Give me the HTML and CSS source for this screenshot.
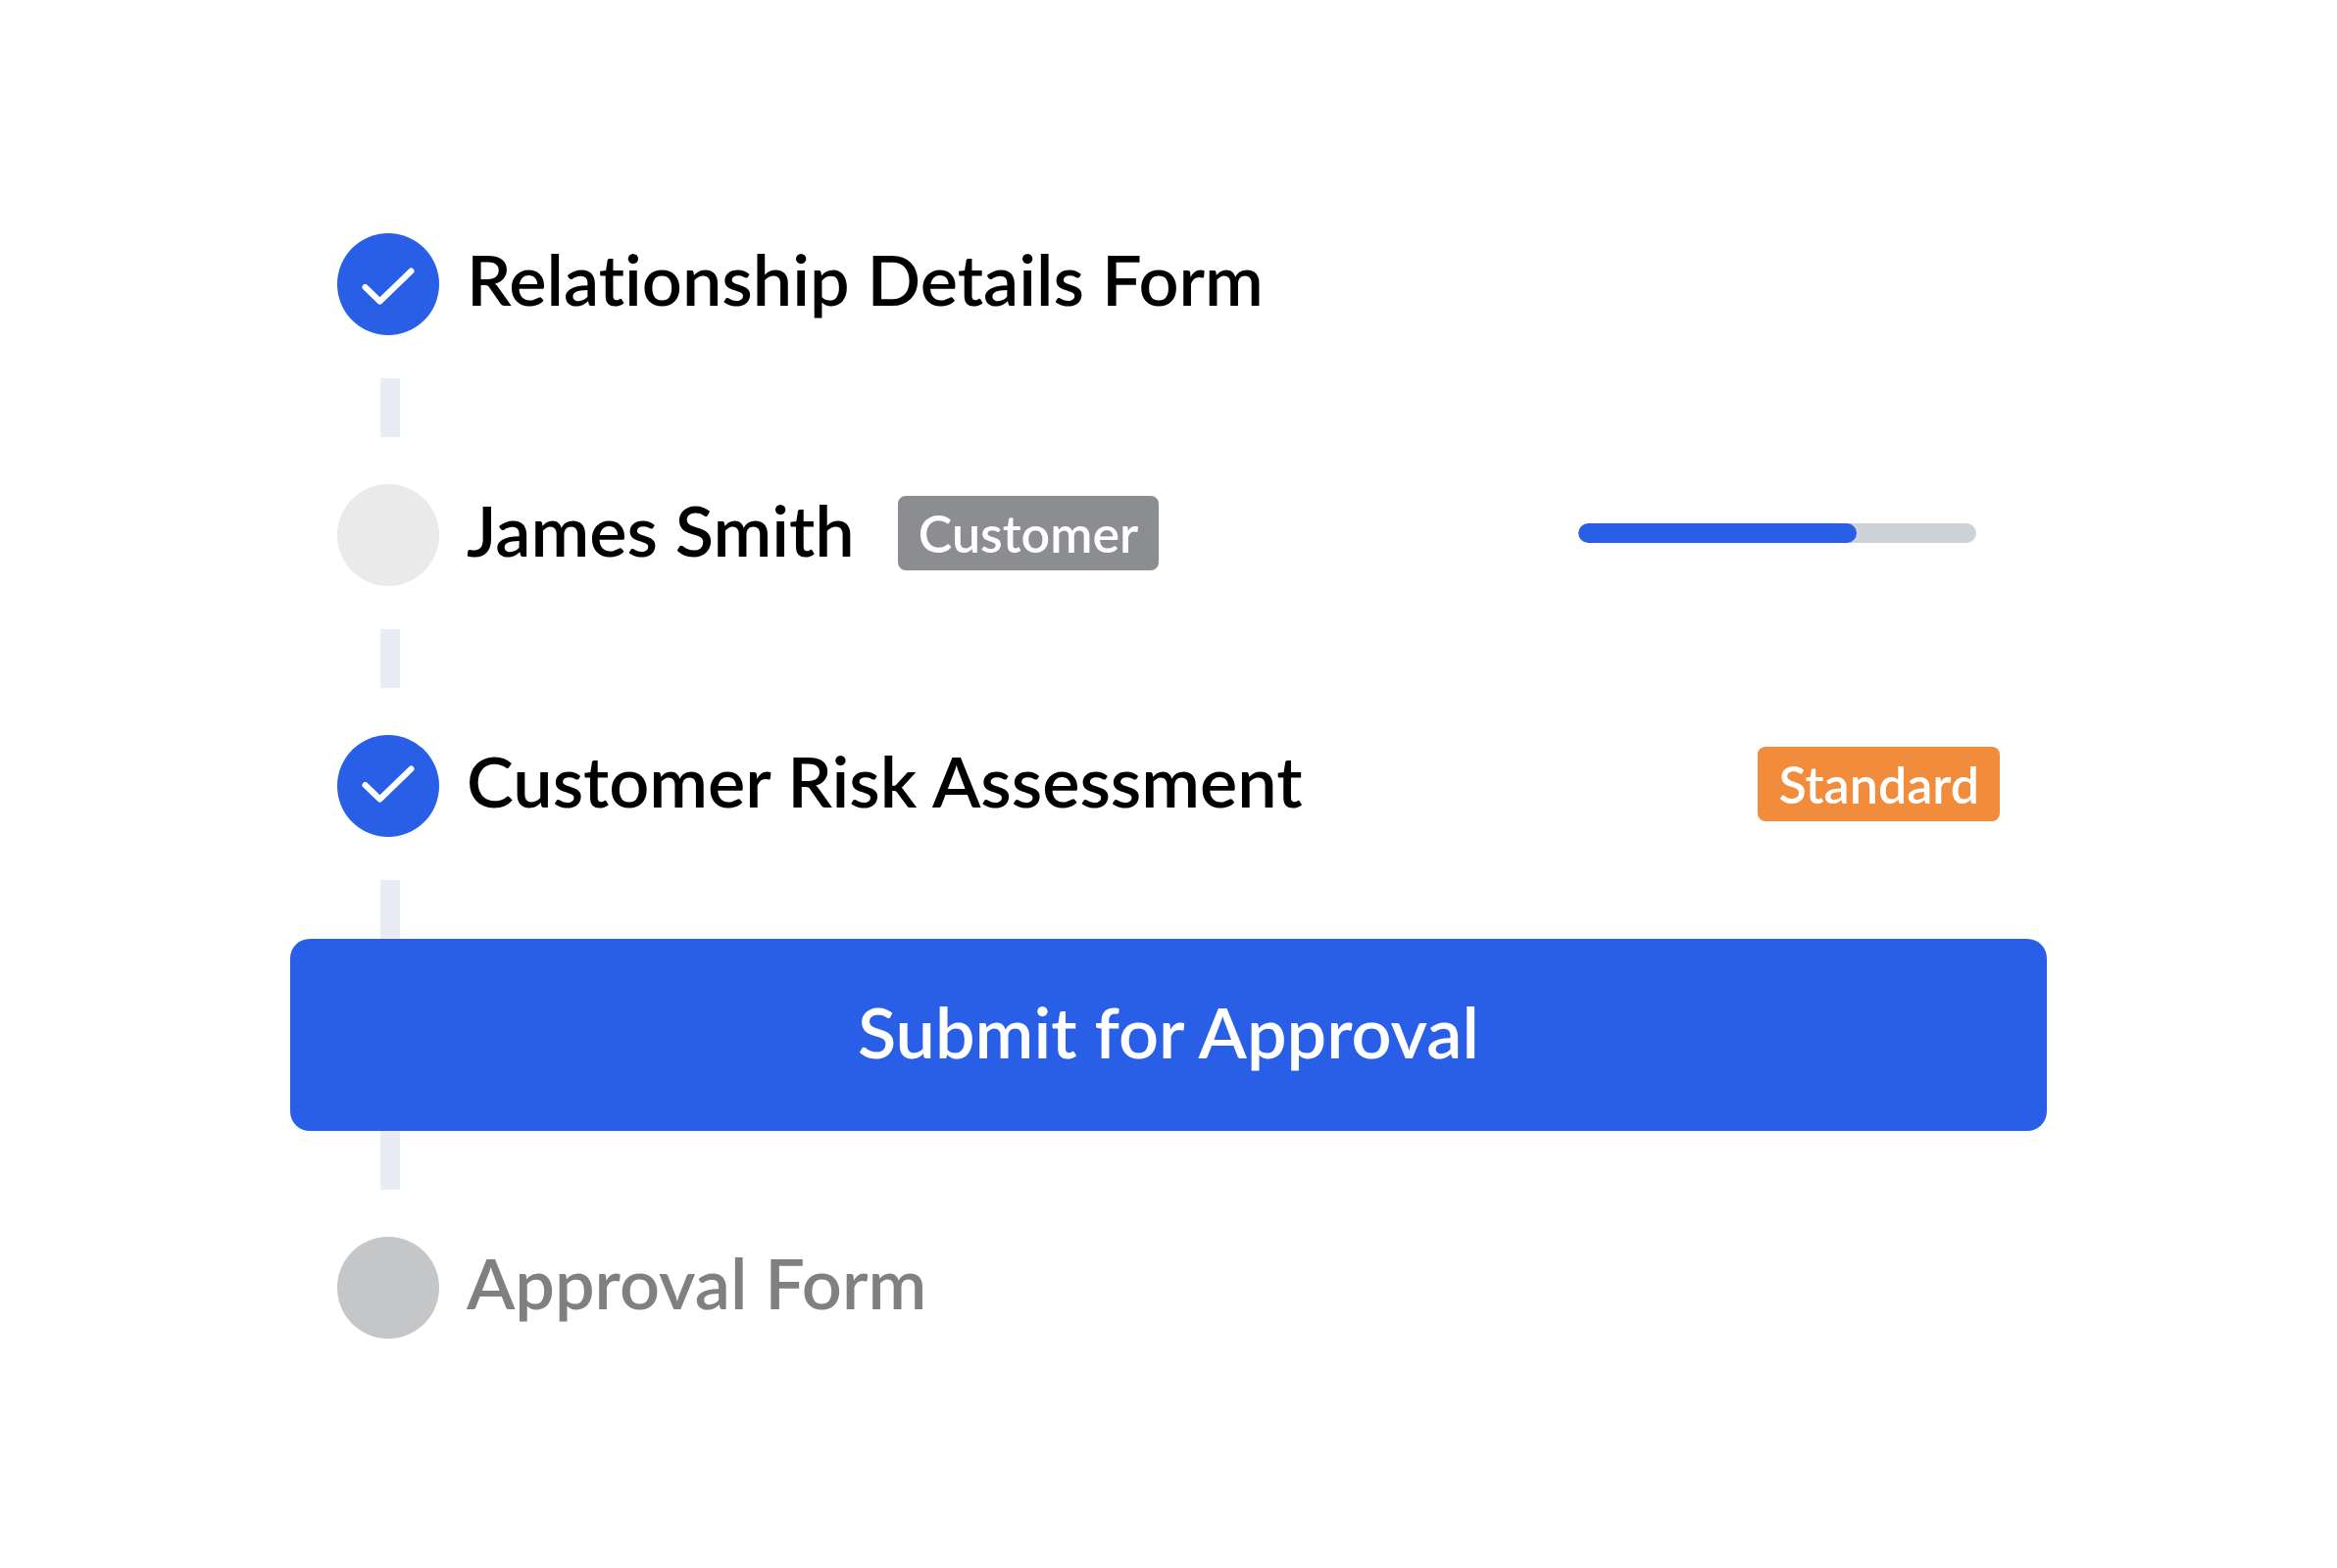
FILE: index.html
```html
<!DOCTYPE html>
<html lang="en">
<head>
<meta charset="utf-8">
<meta name="viewport" content="width=device-width, initial-scale=1">
<title>Onboarding workflow</title>
<link rel="stylesheet" href="styles.css">
</head>
<body>
<main class="workflow">
  <ol class="steps">
    <li class="step">
      <span class="marker marker--done">
        <svg class="check" viewBox="0 0 104 104" role="img" aria-label="Completed"><path d="M28.5 55 43.5 69.5 75.5 38.5"/></svg>
      </span>
      <div class="step-body">
        <span class="step-title">Relationship Details Form</span>
      </div>
    </li>
    <li class="connector" aria-hidden="true"></li>
    <li class="step">
      <span class="marker"></span>
      <div class="step-body">
        <label class="step-title" for="profile-progress">James Smith</label>
        <span class="badge">Customer</span>
        <progress class="progress" id="profile-progress" value="70" max="100"></progress>
      </div>
    </li>
    <li class="connector" aria-hidden="true"></li>
    <li class="step">
      <span class="marker marker--done">
        <svg class="check" viewBox="0 0 104 104" role="img" aria-label="Completed"><path d="M28.5 51 43.5 65.5 75.5 34.5"/></svg>
      </span>
      <div class="step-body">
        <span class="step-title">Customer Risk Assessment</span>
        <span class="badge badge--risk">Standard</span>
      </div>
    </li>
    <li class="connector connector--joined" aria-hidden="true"></li>
    <li class="action"><button class="submit" type="button">Submit for Approval</button></li>
    <li class="connector connector--after" aria-hidden="true"></li>
    <li class="step step--pending">
      <span class="marker marker--pending"></span>
      <div class="step-body">
        <span class="step-title">Approval Form</span>
      </div>
    </li>
  </ol>
</main>
</body>
</html>
```
FILE: styles.css
```css
:root {
  --blue: #295fe6;
  --line: #eaecf5;
}

* {
  box-sizing: border-box;
}

body {
  margin: 0;
  background: #fff;
  color: #000;
  font-family: Lato, "Open Sans", sans-serif;
  font-weight: 600;
  font-variant-ligatures: none;
}

.workflow {
  padding: 238px 296px;
}

.steps {
  margin: 0;
  padding: 0;
  list-style: none;
}

.step {
  display: flex;
  align-items: flex-start;
  gap: 28px;
  padding: 0 48px;
}

.step-body {
  display: flex;
  flex: 1;
  align-items: center;
}

.marker {
  flex: none;
  width: 104px;
  height: 104px;
  border-radius: 50%;
  background: #eaeaea;
}

.marker--done {
  background: var(--blue);
}

.marker--pending {
  background: #c5c6c8;
}

.check {
  display: block;
  width: 100%;
  fill: none;
  stroke: #fff;
  stroke-width: 6;
  stroke-linecap: round;
  stroke-linejoin: round;
}

.step-title {
  padding-bottom: 8px;
  font-size: 72px;
  line-height: 92px;
}

.step--pending {
  color: #808080;
}

.connector {
  width: 20px;
  height: 60px;
  margin: 44px 92px 48px;
  background: var(--line);
}

.connector--joined {
  margin-bottom: 0;
}

.connector--after {
  margin-top: 0;
}

.badge {
  margin-left: 44px;
  padding: 0 21px;
  border-radius: 8px;
  background: #8c8d91;
  color: #fff;
  font-size: 52px;
  line-height: 76px;
}

.badge--risk {
  margin-left: auto;
  background: #f08c3c;
}

.progress {
  appearance: none;
  width: 406px;
  height: 20px;
  margin: 0 24px 0 auto;
  border: 0;
  border-radius: 10px;
  background: #ced3da;
  overflow: hidden;
}

.progress::-webkit-progress-bar {
  background: #ced3da;
}

.progress::-webkit-progress-value {
  border-radius: 10px;
  background: var(--blue);
}

.submit {
  display: block;
  width: 100%;
  padding: 48px 48px 56px;
  border: 0;
  border-radius: 20px;
  background: var(--blue);
  color: #fff;
  font: inherit;
  font-size: 72px;
  line-height: 92px;
}
```
